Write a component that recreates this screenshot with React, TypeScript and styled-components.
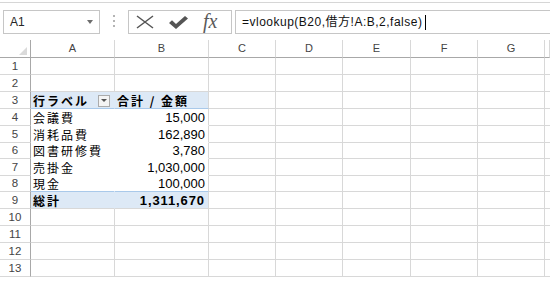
import React from 'react';
import styled, { createGlobalStyle } from 'styled-components';

const GlobalStyle = createGlobalStyle`
    html, body {
        margin: 0;
        padding: 0;
        background: #ffffff;
    }
    body {
        font-family: 'Liberation Sans', 'Noto Sans CJK JP', sans-serif;
    }
`;

const Window = styled.div`
    width: 550px;
    height: 282px;
    overflow: hidden;
    background: #ffffff;
    padding-top: 2px;
    box-sizing: border-box;
`;

const Toolbar = styled.div`
    height: 38px;
    border-top: 1px solid #d6d6d6;
    box-sizing: border-box;
    display: flex;
    align-items: flex-start;
    padding: 7px 0 0 3px;
`;

const NameBox = styled.div`
    width: 97px;
    height: 24px;
    box-sizing: border-box;
    border: 1px solid #c6c6c6;
    display: flex;
    align-items: center;
    justify-content: space-between;
    padding: 0 6px 0 6px;
    font-size: 12px;
    line-height: 14px;
    color: #262626;
`;

const DropArrow = styled.span`
    width: 0;
    height: 0;
    border-left: 3.5px solid transparent;
    border-right: 3.5px solid transparent;
    border-top: 4px solid #6d6d6d;
`;

const Grip = styled.div`
    margin: 5px 13px 0 13px;
    width: 2px;
    display: flex;
    flex-direction: column;
    gap: 3px;
`;

const GripDot = styled.span`
    width: 2px;
    height: 2px;
    background: #b4b4b4;
`;

const FormulaButtons = styled.div`
    width: 104px;
    height: 24px;
    box-sizing: border-box;
    border: 1px solid #c6c6c6;
    display: flex;
    align-items: center;
    padding-left: 7px;
    gap: 15px;
`;

const FxLabel = styled.span`
    font-family: 'Liberation Serif', serif;
    font-style: italic;
    font-size: 20px;
    color: #5a5a5a;
    line-height: 1;
    margin-top: -2px;
`;

const FormulaInput = styled.div`
    flex: 1;
    height: 24px;
    box-sizing: border-box;
    border: 1px solid #c6c6c6;
    border-right: none;
    margin-left: 3px;
    display: flex;
    align-items: center;
    padding-left: 6px;
    font-size: 12px;
    line-height: 15px;
    letter-spacing: 0.5px;
    color: #111;
    white-space: nowrap;
`;

const Caret = styled.span`
    display: inline-block;
    width: 1px;
    height: 15px;
    background: #000;
    margin-left: 3px;
`;

const Sheet = styled.div`
    display: flex;
    flex-direction: column;
`;

const SheetRow = styled.div<{ $height: number }>`
    display: grid;
    grid-template-columns: 31px 84px 94px 67px 67px 68px 67px 67px 1fr;
    height: ${(p) => p.$height}px;
`;

const Corner = styled.div`
    border-right: 1px solid #a8a8a8;
    border-bottom: 1px solid #a8a8a8;
    display: flex;
    align-items: flex-end;
    justify-content: flex-end;
    padding: 0 3px 2px 0;
`;

const CornerTriangle = styled.span`
    width: 0;
    height: 0;
    border-left: 8px solid transparent;
    border-bottom: 8px solid #dadada;
`;

const ColHeader = styled.div`
    border-right: 1px solid #d8d8d8;
    border-bottom: 1px solid #a8a8a8;
    display: flex;
    align-items: center;
    justify-content: center;
    font-size: 11px;
    line-height: 13px;
    color: #444;
`;

const RowHeader = styled.div`
    border-right: 1px solid #a8a8a8;
    border-bottom: 1px solid #d8d8d8;
    display: flex;
    align-items: center;
    justify-content: center;
    font-size: 11.5px;
    line-height: 13px;
    color: #444;
`;

const Cell = styled.div<{ $fill?: string; $right?: string; $bottom?: string; $alignRight?: boolean; $bold?: boolean }>`
    background: ${(p) => p.$fill ?? '#ffffff'};
    border-right: 1px solid ${(p) => p.$right ?? '#d8d8d8'};
    border-bottom: 1px solid ${(p) => p.$bottom ?? '#d8d8d8'};
    display: flex;
    align-items: center;
    justify-content: ${(p) => (p.$alignRight ? 'flex-end' : 'space-between')};
    padding: 1px 3px 0 2px;
    font-size: 13px;
    line-height: 14px;
    font-weight: ${(p) => (p.$bold ? 700 : 400)};
    color: #000;
    white-space: nowrap;
`;

const Label = styled.span`
    font-family: 'Noto Sans CJK JP', sans-serif;
    font-size: 12px;
    letter-spacing: 2px;
    line-height: 14px;
`;

const Amount = styled.span<{ $spacing?: number }>`
    font-family: 'Liberation Sans', sans-serif;
    letter-spacing: ${(p) => p.$spacing ?? 0}px;
    line-height: 14px;
`;

const FilterButton = styled.span`
    width: 12px;
    height: 12px;
    box-sizing: border-box;
    border: 1px solid #ababab;
    background: #f4f4f4;
    display: flex;
    align-items: center;
    justify-content: center;
    margin-right: 1px;

    &::after {
        content: '';
        border-left: 3px solid transparent;
        border-right: 3px solid transparent;
        border-top: 3px solid #555;
    }
`;

const BLUE = '#dde9f6';
const BLUE_LINE = '#a9c9ea';

const COLUMNS = ['A', 'B', 'C', 'D', 'E', 'F', 'G', ''];
const ROW_HEIGHTS = [17, 17, 17, 17, 17, 16, 17, 16, 17, 17, 17, 17, 17];

const pivotItems = [
    { label: '会議費', amount: '15,000' },
    { label: '消耗品費', amount: '162,890' },
    { label: '図書研修費', amount: '3,780' },
    { label: '売掛金', amount: '1,030,000' },
    { label: '現金', amount: '100,000' },
];

const renderCells = (row: number) => {
    return COLUMNS.map((_, col) => {
        const key = `${row}-${col}`;
        if (row === 3 && col === 0) {
            return (
                <Cell key={key} $fill={BLUE} $right={BLUE} $bottom={BLUE_LINE} $bold>
                    <Label>行ラベル</Label>
                    <FilterButton />
                </Cell>
            );
        }
        if (row === 3 && col === 1) {
            return (
                <Cell key={key} $fill={BLUE} $bottom={BLUE_LINE} $bold>
                    <Label>合計 / 金額</Label>
                </Cell>
            );
        }
        if (row >= 4 && row <= 8 && col <= 1) {
            const item = pivotItems[row - 4];
            const bottom = row === 8 ? BLUE_LINE : '#ffffff';
            if (col === 0) {
                return (
                    <Cell key={key} $right="#ffffff" $bottom={bottom}>
                        <Label>{item.label}</Label>
                    </Cell>
                );
            }
            return (
                <Cell key={key} $bottom={bottom} $alignRight>
                    <Amount>{item.amount}</Amount>
                </Cell>
            );
        }
        if (row === 9 && col === 0) {
            return (
                <Cell key={key} $fill={BLUE} $right={BLUE} $bold>
                    <Label>総計</Label>
                </Cell>
            );
        }
        if (row === 9 && col === 1) {
            return (
                <Cell key={key} $fill={BLUE} $bold $alignRight>
                    <Amount $spacing={0.9}>1,311,670</Amount>
                </Cell>
            );
        }
        return <Cell key={key} />;
    });
};

const App: React.FC = () => {
    return (
        <Window>
            <GlobalStyle />
            <Toolbar>
                <NameBox>
                    <span>A1</span>
                    <DropArrow />
                </NameBox>
                <Grip>
                    <GripDot />
                    <GripDot />
                    <GripDot />
                </Grip>
                <FormulaButtons>
                    <svg width="18" height="14" viewBox="0 0 18 14">
                        <path d="M1 1 L17 13 M17 1 L1 13" stroke="#555" strokeWidth="1.5" fill="none" />
                    </svg>
                    <svg width="19" height="13" viewBox="0 0 19 13">
                        <path d="M0 7 L3 4.2 L7 8 L16 0 L19 2.6 L7 13 Z" fill="#555" />
                    </svg>
                    <FxLabel>fx</FxLabel>
                </FormulaButtons>
                <FormulaInput>
                    =vlookup(B20,借方!A:B,2,false)
                    <Caret />
                </FormulaInput>
            </Toolbar>
            <Sheet>
                <SheetRow $height={18}>
                    <Corner>
                        <CornerTriangle />
                    </Corner>
                    {COLUMNS.map((c, i) => (
                        <ColHeader key={i}>{c}</ColHeader>
                    ))}
                </SheetRow>
                {ROW_HEIGHTS.map((h, i) => (
                    <SheetRow key={i} $height={h}>
                        <RowHeader>{i + 1}</RowHeader>
                        {renderCells(i + 1)}
                    </SheetRow>
                ))}
            </Sheet>
        </Window>
    );
};

export default App;
